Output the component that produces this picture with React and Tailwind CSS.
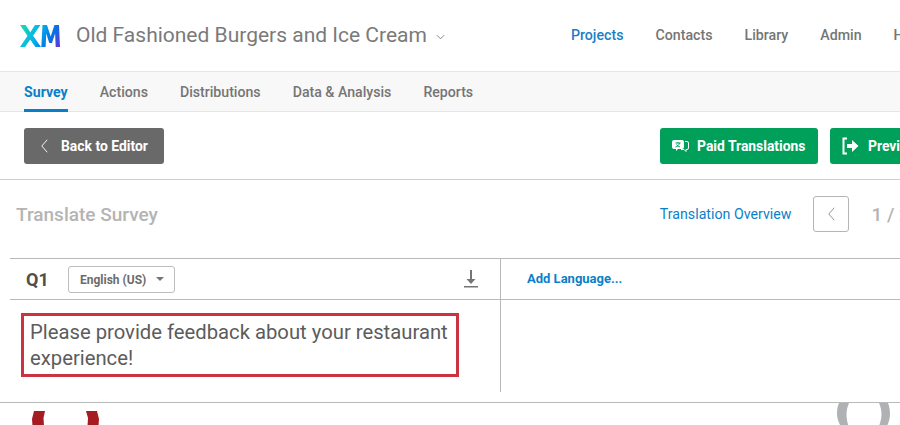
import React from "react";

const Chevron = ({ className }) => (
  <svg viewBox="0 0 11 18" className={`shrink-0 ${className}`} fill="none" stroke="currentColor" strokeWidth="1.2">
    <path d="M9 1 L2 9 L9 17" />
  </svg>
);

const Logo = () => (
  <svg width="40" height="22" viewBox="0 0 40 22" className="shrink-0">
    <defs>
      <linearGradient id="xmg" gradientUnits="userSpaceOnUse" x1="0" y1="0" x2="40" y2="22">
        <stop offset="0" stopColor="#21dbaa" />
        <stop offset="0.42" stopColor="#00b4ef" />
        <stop offset="0.72" stopColor="#0673e3" />
        <stop offset="1" stopColor="#6a30d8" />
      </linearGradient>
    </defs>
    <path
      fill="url(#xmg)"
      d="M0 0h5.600l4.700 7.300L15 0h5.400l-7.300 10.700L21 22h-5.600l-5.200-7.600L5 22H0l7.500-11.300z"
    />
    <path
      fill="url(#xmg)"
      d="M22.500 0h4.500l3.700 11.500L34.400 0H39l1 22h-4.300l-.6-13.500L32 18h-2.700l-3.100-9.500-.6 13.500h-4.300z"
    />
  </svg>
);

const TranslateIcon = () => (
  <svg width="17" height="14" viewBox="0 0 17 14" className="shrink-0">
    <path fill="#fff" d="M2 1h8a2 2 0 0 1 2 2v5a2 2 0 0 1-2 2H6l-2 2v-2H2a2 2 0 0 1-2-2V3a2 2 0 0 1 2-2z" />
    <path fill="none" stroke="#fff" strokeWidth="1" d="M13 2.500h2a1.500 1.500 0 0 1 1.500 1.500v5a1.500 1.500 0 0 1-1.500 1.500h-1v2l-2-2H9" />
    <path fill="none" stroke="#00a05a" strokeWidth="1" d="M3.500 4h5M6 3v1M7.500 4c-.5 2-2 3.500-4 4M4.500 5.500c.5 1 2 2 3.500 2.500" />
  </svg>
);

const PreviewIcon = () => (
  <svg width="17" height="18" viewBox="0 0 17 18" className="shrink-0">
    <path fill="none" stroke="#fff" strokeWidth="2" d="M5 1.500H1.500v15H5" />
    <path fill="#fff" d="M5 7h5V3l6.500 6-6.500 6v-4H5z" />
  </svg>
);

const DownloadIcon = () => (
  <svg width="14" height="18" viewBox="0 0 14 18" className="shrink-0">
    <path fill="#757575" d="M6 0h2v9h3.500L7 14 2.500 9H6zM0 16h14v1.500H0z" />
  </svg>
);

export default function App() {
  return (
    <div
      className="w-[900px] h-[425px] overflow-hidden bg-white flex flex-col text-[#6b6b6b]"
      style={{ fontFamily: "Roboto, 'Liberation Sans', sans-serif" }}
    >
      <header className="h-[72px] shrink-0 border-b border-[#e6e6e6] flex items-center pl-[20px]">
        <Logo />
        <span className="ml-[16px] shrink-0 text-[21px] leading-none text-[#7a7a7a] whitespace-nowrap">
          Old Fashioned Burgers and Ice Cream
        </span>
        <svg viewBox="0 0 10 6" className="shrink-0 ml-[9px] mt-[3px] w-[9px] h-[6px] text-[#888]" fill="none" stroke="currentColor" strokeWidth="1.1">
          <path d="M1 1 L5 5 L9 1" />
        </svg>
        <nav className="ml-[126px] shrink-0 flex items-center gap-[32px] text-[14.200px] font-medium text-[#757575] whitespace-nowrap">
          <span className="text-[#1c7fc4]">Projects</span>
          <span>Contacts</span>
          <span>Library</span>
          <span>Admin</span>
          <span>Help</span>
        </nav>
      </header>

      <div className="h-[40px] shrink-0 bg-[#f8f8f8] border-b border-[#e6e6e6] flex pl-[24px] gap-[32px] text-[14.150px] font-medium text-[#757575]">
        <span className="h-[40px] flex items-center border-b-[3px] border-[#0a7fc9] text-[#0a7fc9] font-bold pt-[4px]">Survey</span>
        <span className="h-[40px] flex items-center pt-[2px]">Actions</span>
        <span className="h-[40px] flex items-center pt-[2px]">Distributions</span>
        <span className="h-[40px] flex items-center pt-[2px]">Data &amp; Analysis</span>
        <span className="h-[40px] flex items-center pt-[2px]">Reports</span>
      </div>

      <div className="h-[68px] shrink-0 border-b border-[#cfcfcf] flex items-start pt-[16px] pl-[24px] text-white text-[13.900px] font-bold whitespace-nowrap">
        <button className="w-[140px] shrink-0 h-[36px] rounded-[3px] bg-[#696969] flex items-center pl-[16px] gap-[12px]">
          <Chevron className="w-[9px] h-[14px]" />
          Back to Editor
        </button>
        <button className="ml-[496px] shrink-0 w-[158px] h-[36px] rounded-[3px] bg-[#00a05a] flex items-center pl-[12px] gap-[8px]">
          <TranslateIcon />
          Paid Translations
        </button>
        <button className="ml-[12px] w-[120px] h-[36px] shrink-0 rounded-[3px] bg-[#00a05a] flex items-center pl-[12px] gap-[9px]">
          <PreviewIcon />
          Preview
        </button>
      </div>

      <div className="h-[78px] shrink-0 flex items-start pt-[16px] pl-[16px] whitespace-nowrap">
        <span className="shrink-0 text-[19px] leading-[36px] pt-[1px] font-medium text-[#b4b4b4]">Translate Survey</span>
        <span className="shrink-0 ml-[502px] text-[14.200px] leading-[36px] text-[#0a7fc9]">Translation Overview</span>
        <button className="ml-[22px] w-[36px] h-[36px] shrink-0 rounded-[3px] border border-[#b5b5b5] flex items-center justify-center text-[#8a8a8a]">
          <Chevron className="w-[9px] h-[14px]" />
        </button>
        <span className="shrink-0 ml-[22px] text-[19px] leading-[36px] pt-[1px] font-medium text-[#b4b4b4]">1 / 2</span>
      </div>

      <div className="ml-[10px] h-[145px] shrink-0 flex flex-col">
        <div className="h-[42px] shrink-0 border-y border-[#b9b9b9] flex">
          <div className="w-[491px] shrink-0 flex items-center pl-[16px] pr-[22px] border-r border-[#b9b9b9]">
            <span className="text-[18px] font-bold text-[#4f4f4f] w-[42px] pt-[1px]">Q1</span>
            <button className="w-[107px] h-[27px] rounded-[3px] border border-[#bdbdbd] flex items-center pl-[11px] gap-[10px] text-[12px] font-bold text-[#6b6b6b] whitespace-nowrap">
              <span className="pt-[2px]">English (US)</span>
              <span className="w-0 h-0 border-x-[4px] border-x-transparent border-t-[4px] border-t-[#757575]" />
            </button>
            <span className="ml-auto"><DownloadIcon /></span>
          </div>
          <div className="flex items-center pl-[26px] text-[13px] font-bold text-[#0a7fc9] whitespace-nowrap">Add Language...</div>
        </div>
        <div className="h-[92px] shrink-0 flex">
          <div className="w-[491px] shrink-0 border-r border-[#b9b9b9] pl-[11px] pt-[13px]">
            <div className="w-[438px] h-[64px] border-[3px] border-[#cc3340] pl-[6px] pt-[3px] text-[20.250px] leading-[26px] font-normal text-[#5c5c5c]">
              Please provide feedback about your restaurant experience!
            </div>
          </div>
        </div>
      </div>

      <div className="shrink-0 border-t border-[#b9b9b9] h-[24px] mt-[-1px] overflow-hidden flex items-start pl-[32px] pt-[8px]">
        <svg width="67" height="15" viewBox="0 0 67 15" className="shrink-0">
          <path fill="#a51d23" d="M2 0h11l-1.500 7 .5 8H0.500L0 8zM54 0h11l2 8-.5 7H55.500l.5-8z" />
        </svg>
        <svg width="53" height="23" viewBox="0 0 53 23" className="shrink-0 ml-[738px] mt-[-8px]">
          <path fill="#b0b1b5" d="M2 0h10C10.500 4 9.500 7 9.500 11c0 4 .7 8 2 12H3.500C1.500 19 0 15 0 11 0 7 .5 3 2 0zM42 0h9c1.300 3 2 7 2 11 0 4-1 8-3 12h-8c1.500-4 2.500-8 2.500-12 0-4-1-8-2.500-11z" />
          <path fill="#b0b1b5" d="M18 23c2-1 6-1 9 0z" />
        </svg>
      </div>
    </div>
  );
}
